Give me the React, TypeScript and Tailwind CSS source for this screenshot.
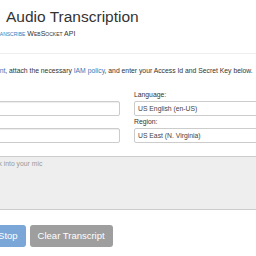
export default function App() {
  return (
    <div className="w-[256px] h-[256px] overflow-hidden bg-white text-[#333] font-['Liberation_Sans',Arial,sans-serif]">
      <div className="-ml-[65px] w-[384px]">
        <h1 className="mt-[8px] ml-[71px] text-[15.5px] leading-[18px] font-normal whitespace-nowrap">
          Audio Transcription
        </h1>
        <p className="mt-[3px] pl-[15px] text-[7px] leading-[9px] [font-variant:small-caps] whitespace-nowrap">
          using <a className="text-[#337ab7]">Amazon Transcribe</a> WebSocket API
        </p>

        <hr className="mt-[15px] border-t border-[#eee]" />

        <p className="mt-[12px] -ml-[2px] text-[6.8px] leading-[10px] whitespace-nowrap">
          Create an <a className="text-[#337ab7]">AWS account</a>, attach the necessary{" "}
          <a className="text-[#337ab7]">IAM policy</a>, and enter your Access Id and Secret Key below.
        </p>

        <form className="mt-[14px] grid grid-cols-2 gap-x-[14px] gap-y-[1px] text-[6.8px]">
          <div className="flex flex-col">
            <label className="leading-[9px] mb-[2px] whitespace-nowrap">Access Id:</label>
            <input className="h-[15px] rounded-[2px] border border-[#ccc] bg-white px-[5px] shadow-[inset_0_1px_1px_rgba(0,0,0,0.075)] outline-none" />
          </div>
          <div className="flex flex-col">
            <label className="leading-[9px] mb-[2px] whitespace-nowrap">Language:</label>
            <select className="h-[15px] appearance-none rounded-[2px] border border-[#ccc] bg-white px-[3px] text-[#444] leading-[13px] outline-none">
              <option>US English (en-US)</option>
            </select>
          </div>
          <div className="flex flex-col">
            <label className="leading-[9px] mb-[2px] whitespace-nowrap">Secret Key:</label>
            <input className="h-[15px] rounded-[2px] border border-[#ccc] bg-white px-[5px] shadow-[inset_0_1px_1px_rgba(0,0,0,0.075)] outline-none" />
          </div>
          <div className="flex flex-col">
            <label className="leading-[9px] mb-[2px] whitespace-nowrap">Region:</label>
            <select className="h-[15px] appearance-none rounded-[2px] border border-[#ccc] bg-white px-[3px] text-[#444] leading-[13px] outline-none">
              <option>US East (N. Virginia)</option>
            </select>
          </div>
        </form>

        <textarea
          disabled
          placeholder="Press Start and speak into your mic"
          className="mt-[13px] -ml-[4px] block w-[388px] h-[54px] resize-none rounded-[2px] border border-[#ccc] bg-[#eee] px-[3px] pt-[2px] text-[6.8px] leading-[10px] placeholder:text-[#999]"
        />

        <div className="mt-[15px] ml-[15px] flex gap-[4px] text-[9.5px]">
          <button className="h-[22px] px-[8px] rounded-[3px] bg-[#7aa7d8] text-white whitespace-nowrap">
            Start
          </button>
          <button className="h-[22px] px-[8px] rounded-[3px] bg-[#7aa7d8] text-white whitespace-nowrap">
            Stop
          </button>
          <button className="h-[22px] px-[8px] rounded-[3px] bg-[#9e9e9e] text-white whitespace-nowrap">
            Clear Transcript
          </button>
        </div>
      </div>
    </div>
  );
}
